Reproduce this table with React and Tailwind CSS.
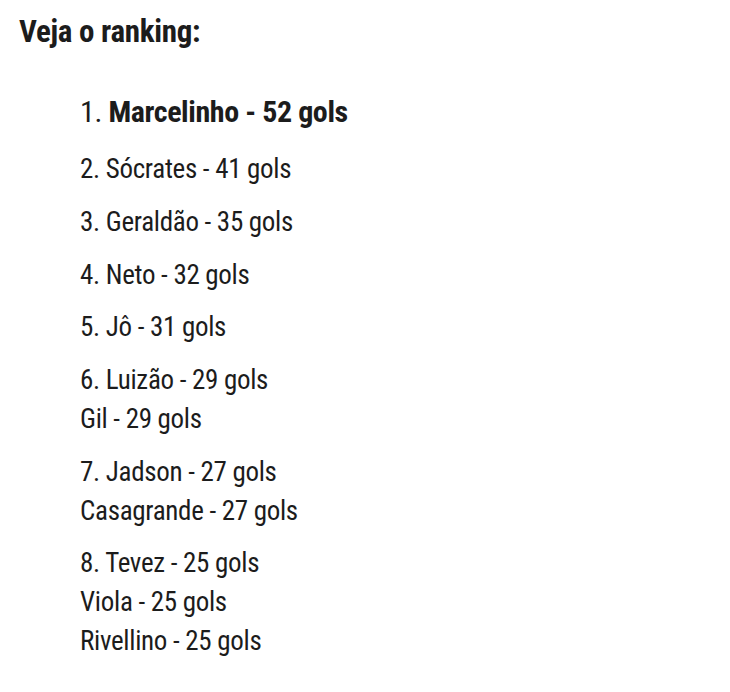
const groups = [
  ["2. Sócrates - 41 gols"],
  ["3. Geraldão - 35 gols"],
  ["4. Neto - 32 gols"],
  ["5. Jô - 31 gols"],
  ["6. Luizão - 29 gols", "Gil - 29 gols"],
  ["7. Jadson - 27 gols", "Casagrande - 27 gols"],
  ["8. Tevez - 25 gols", "Viola - 25 gols", "Rivellino - 25 gols"],
];

export default function App() {
  return (
    <div className="w-[730px] h-[692px] bg-white text-[#1c1c1c] font-['Roboto_Condensed',sans-serif] pl-[19px] pt-[13px]">
      <h2 className="text-[31px] leading-[38px] font-bold tracking-[-0.3px]">Veja o ranking:</h2>
      <div className="ml-[61px] mt-[41px] flex flex-col">
        <p className="text-[30px] leading-[40px] tracking-[-0.4px] mb-[18px]">
          <span className="font-normal">1. </span>
          <span className="font-bold">Marcelinho - 52 gols</span>
        </p>
        <div className="flex flex-col gap-[14px] text-[27px] leading-[38.8px] tracking-[-0.3px]">
          {groups.map((g, i) => (
            <div key={i} className="flex flex-col">
              {g.map((line) => (
                <p key={line}>{line}</p>
              ))}
            </div>
          ))}
        </div>
      </div>
    </div>
  );
}
